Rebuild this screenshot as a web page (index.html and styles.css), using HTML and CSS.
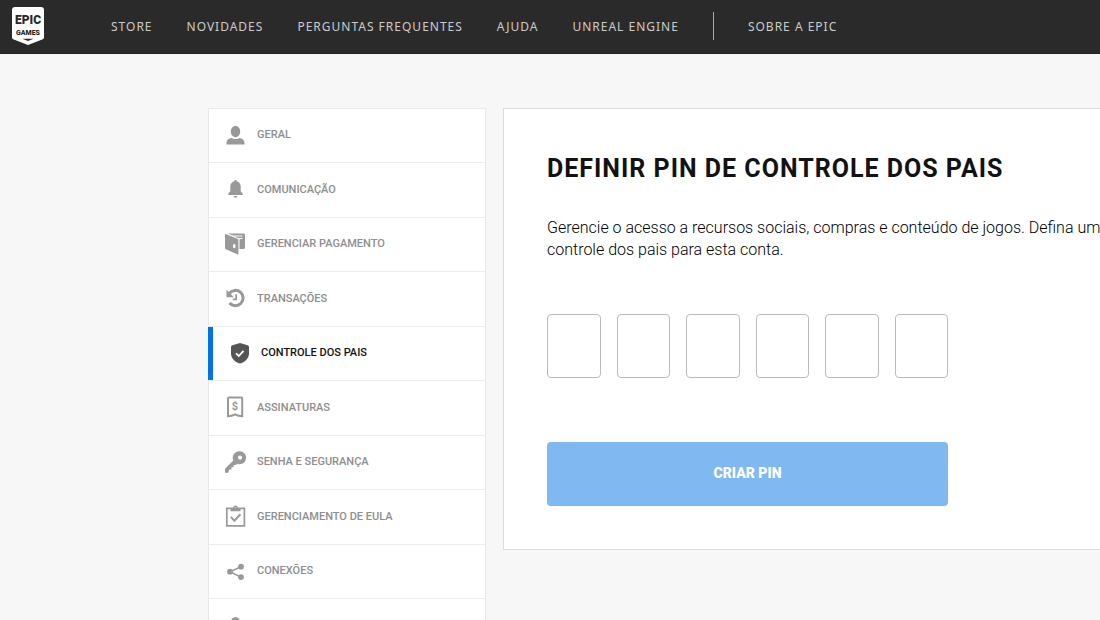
FILE: index.html
```html
<!DOCTYPE html>
<html lang="pt-BR">
<head>
    <meta charset="UTF-8">
    <meta name="viewport" content="width=device-width, initial-scale=1.0">
    <title>Controle dos pais</title>
    <link rel="stylesheet" href="styles.css">
</head>
<body>
    <header class="topbar">
        <a href="#" class="logo" aria-label="Epic Games">
            <svg width="32" height="38" viewBox="0 0 32 38">
                <path fill="#fff" d="M3 0h26a3 3 0 0 1 3 3v27.500a2 2 0 0 1-1.200 1.800L16 38 1.200 32.300A2 2 0 0 1 0 30.500V3a3 3 0 0 1 3-3z"/>
                <text class="logo-epic" x="16" y="17" text-anchor="middle">EPIC</text>
                <text class="logo-games" x="16" y="28" text-anchor="middle">GAMES</text>
                <path fill="#2a2a2a" d="M10.500 31.800h11L16 34z"/>
            </svg>
        </a>
        <nav class="topnav">
            <a href="#">STORE</a>
            <a href="#">NOVIDADES</a>
            <a href="#">PERGUNTAS FREQUENTES</a>
            <a href="#">AJUDA</a>
            <a href="#">UNREAL ENGINE</a>
            <span class="divider"></span>
            <a href="#">SOBRE A EPIC</a>
        </nav>
    </header>

    <div class="layout">
        <ul class="sidebar">
            <li><a href="#">
                <svg class="icon" viewBox="0 0 22 22"><ellipse cx="11.500" cy="7.500" rx="4.700" ry="5.700"/><path d="M2.500 20.500v-1.600c0-2.800 2-4.600 5.300-5 2.400 1.600 5 1.600 7.400 0 3.300.4 5.300 2.200 5.300 5v1.600z"/></svg>
                GERAL
            </a></li>
            <li><a href="#">
                <svg class="icon" viewBox="0 0 22 22"><path d="M11.500 2c.8 0 1.200.5 1.200 1.300 2.600.6 4 2.700 4 5.300v4.600l2 2.200V17h-14.400v-1.600l2-2.200V8.600c0-2.600 1.400-4.700 4-5.300 0-.8.4-1.300 1.200-1.300zM9.700 18h3.600c0 1-.8 1.700-1.800 1.700S9.700 19 9.700 18z"/></svg>
                COMUNICAÇÃO
            </a></li>
            <li><a href="#">
                <svg class="icon" viewBox="0 0 22 22"><path d="M4 .5h15.500c.9 0 1.500.6 1.500 1.500v12.500c0 .9-.6 1.500-1.500 1.500h-4V5.800z"/><path stroke="#fff" d="M8 3h10.500M13 5.500h5.500"/><path fill-rule="evenodd" d="M1 .8l12.500 5c.6.2.9.6.9 1.200v14.800L1.800 16.300c-.5-.2-.8-.6-.8-1.200zM10.300 11c-.9 0-1.400.9-1.400 2s.5 2.200 1.400 2.200 1.300-.9 1.300-2.100-.5-2.100-1.300-2.100z"/></svg>
                GERENCIAR PAGAMENTO
            </a></li>
            <li><a href="#">
                <svg class="icon" viewBox="0 0 22 22"><path class="line" stroke-width="3" d="M5.200 6.500A7.700 7.700 0 1 1 5.500 16"/><path d="M2.500 2.800v7.400h7.400z"/><path class="line" stroke-width="1.800" d="M12.200 7.300v5H8.800"/></svg>
                TRANSAÇÕES
            </a></li>
            <li class="active"><a href="#" aria-current="page">
                <svg class="icon" viewBox="0 0 22 22"><path d="M12 .9l7.600 2.400c.8.2 1.400.9 1.400 1.700v6.400c0 5-4.500 8.800-9 10.200-4.500-1.400-9-5.200-9-10.200V5c0-.8.6-1.500 1.400-1.700z"/><path class="check" stroke-width="1.800" d="M8 11.400l2.800 2.600 4.700-5.200"/></svg>
                CONTROLE DOS PAIS
            </a></li>
            <li><a href="#">
                <svg class="icon" viewBox="0 0 22 22"><path class="line" stroke-width="2" d="M4 2.400c0-.6.400-1 1-1h12.200c.6 0 1 .4 1 1v17.800c-2.600 0-4.600-.4-7.100-1.900-2.500 1.500-4.500 1.900-7.100 1.900z"/><text x="11" y="14" text-anchor="middle">$</text></svg>
                ASSINATURAS
            </a></li>
            <li><a href="#">
                <svg class="icon" viewBox="0 0 22 22"><path fill-rule="evenodd" d="M15.500.3a6.500 6.500 0 1 1-2.400 12.500l-1.300 1.300H9.600v2.100H7.400v2.200H5.300L4.200 21.700H1v-3.900l8.300-8.300A6.500 6.500 0 0 1 15.500.3zM16 4.500a2.100 2.100 0 1 0 0 4.200 2.100 2.100 0 0 0 0-4.200z"/></svg>
                SENHA E SEGURANÇA
            </a></li>
            <li><a href="#">
                <svg class="icon" viewBox="0 0 22 22"><path class="line" stroke-width="1.700" d="M2.800 3.300h17.600v17.600H2.800z"/><path fill-rule="evenodd" d="M6.500 6.200V4.500c0-.9.700-1.500 1.500-1.500h1c.2-1.500 1.200-2.500 2.500-2.500S13.800 1.500 14 3h1c.8 0 1.500.6 1.500 1.500v1.700zM11.500 2a1 1 0 1 0 0 2 1 1 0 0 0 0-2z"/><path class="line" stroke-width="2" d="M6.800 11.800l3.600 4 6-6.500"/></svg>
                GERENCIAMENTO DE EULA
            </a></li>
            <li><a href="#">
                <svg class="icon" viewBox="0 0 22 22"><circle cx="6" cy="11.700" r="2.900"/><circle cx="17" cy="6.700" r="2.900"/><circle cx="17" cy="17.100" r="2.900"/><path class="line" stroke-width="1.600" d="M17 6.700L6 11.700l11 5.400"/></svg>
                CONEXÕES
            </a></li>
            <li><a href="#" aria-label="Conta">
                <svg class="icon" viewBox="0 0 22 22"><ellipse cx="11.500" cy="8.500" rx="4.600" ry="5.600"/><path d="M2.500 21.300v-1.600c0-2.600 2-4.400 5.500-4.700 2.300 1.500 4.700 1.500 7 0 3.500.3 5.500 2.100 5.500 4.700v1.600z"/></svg>
            </a></li>
        </ul>

        <main class="panel">
            <h1>DEFINIR PIN DE CONTROLE DOS PAIS</h1>
            <p>Gerencie o acesso a recursos sociais, compras e conteúdo de jogos. Defina um novo PIN de controle dos pais para esta conta.</p>
            <form class="pin-form">
                <div class="pin-inputs">
                    <input type="text" maxlength="1" inputmode="numeric" aria-label="Dígito 1">
                    <input type="text" maxlength="1" inputmode="numeric" aria-label="Dígito 2">
                    <input type="text" maxlength="1" inputmode="numeric" aria-label="Dígito 3">
                    <input type="text" maxlength="1" inputmode="numeric" aria-label="Dígito 4">
                    <input type="text" maxlength="1" inputmode="numeric" aria-label="Dígito 5">
                    <input type="text" maxlength="1" inputmode="numeric" aria-label="Dígito 6">
                </div>
                <button type="submit" disabled>CRIAR PIN</button>
            </form>
        </main>
    </div>
</body>
</html>
```
FILE: styles.css
```css
* {
    box-sizing: border-box;
}

body {
    margin: 0;
    background-color: #f7f7f7;
    color: #121212;
    font-family: Roboto, sans-serif;
    overflow-x: hidden;
}

a {
    color: inherit;
    text-decoration: none;
}

/* top bar */
.topbar {
    display: flex;
    align-items: center;
    height: 54px;
    padding: 0 0 1px 12px;
    background-color: #2a2a2a;
    border-bottom: 1px solid #202020;
}

.logo {
    display: flex;
    margin-right: 67px;
}

.logo-epic {
    font: 900 12px Roboto, sans-serif;
    fill: #2a2a2a;
}

.logo-games {
    font: 900 7px Roboto, sans-serif;
    fill: #2a2a2a;
}

.topnav {
    display: flex;
    align-items: center;
    gap: 34px;
    font-family: "Noto Sans", sans-serif;
    font-size: 12px;
    letter-spacing: 1px;
    color: #ccc;
    white-space: nowrap;
}

.divider {
    width: 1px;
    height: 28px;
    background-color: #aaa;
}

/* content */
.layout {
    display: flex;
    align-items: flex-start;
    gap: 17px;
    padding: 54px 0 0 208px;
}

.sidebar {
    flex: none;
    width: 278px;
    margin: 0;
    padding: 0;
    list-style: none;
    background-color: #fff;
    border: 1px solid #e9e9e9;
}

.sidebar li {
    height: 54px;
    border-bottom: 1px solid #ececec;
}

.sidebar li:nth-child(even) {
    height: 55px;
}

.sidebar a {
    display: flex;
    align-items: center;
    gap: 11px;
    height: 100%;
    padding: 0 0 2px 15px;
    font-size: 11px;
    font-weight: 500;
    color: #8e8e8e;
}

.sidebar .active {
    margin-left: -1px;
}

.sidebar .active a {
    border-left: 5px solid #0074e4;
    color: #121212;
}

.icon {
    width: 22px;
    height: 22px;
    fill: #999;
}

.icon .line {
    fill: none;
    stroke: #999;
}

.icon text {
    font-size: 11px;
    font-weight: 700;
}

.active .icon {
    fill: #555;
}

.icon .check {
    fill: none;
    stroke: #fff;
}

.panel {
    flex: 1 0 744px;
    padding: 42px 43px 43px;
    background-color: #fff;
    border: 1px solid #dcdcdc;
}

h1 {
    margin: 0;
    font-size: 25px;
    font-weight: 700;
    line-height: 36px;
    letter-spacing: 1px;
}

p {
    margin: 30px 0 53px;
    font-size: 16px;
    font-weight: 300;
    line-height: 22px;
    color: #000;
}

.pin-form {
    max-width: 401px;
}

.pin-inputs {
    display: grid;
    grid-template-columns: repeat(6, 1fr);
    gap: 16px;
    margin-bottom: 64px;
}

.pin-inputs input {
    width: 100%;
    height: 64px;
    padding: 0;
    border: 1px solid #bbb;
    border-radius: 4px;
    background-color: #fff;
    text-align: center;
    font-size: 26px;
}

button {
    display: block;
    width: 100%;
    height: 64px;
    padding: 0 0 3px;
    border: 0;
    border-radius: 4px;
    background-color: #80b8f1;
    color: #fff;
    font-family: inherit;
    font-size: 14px;
    font-weight: 900;
}
```
